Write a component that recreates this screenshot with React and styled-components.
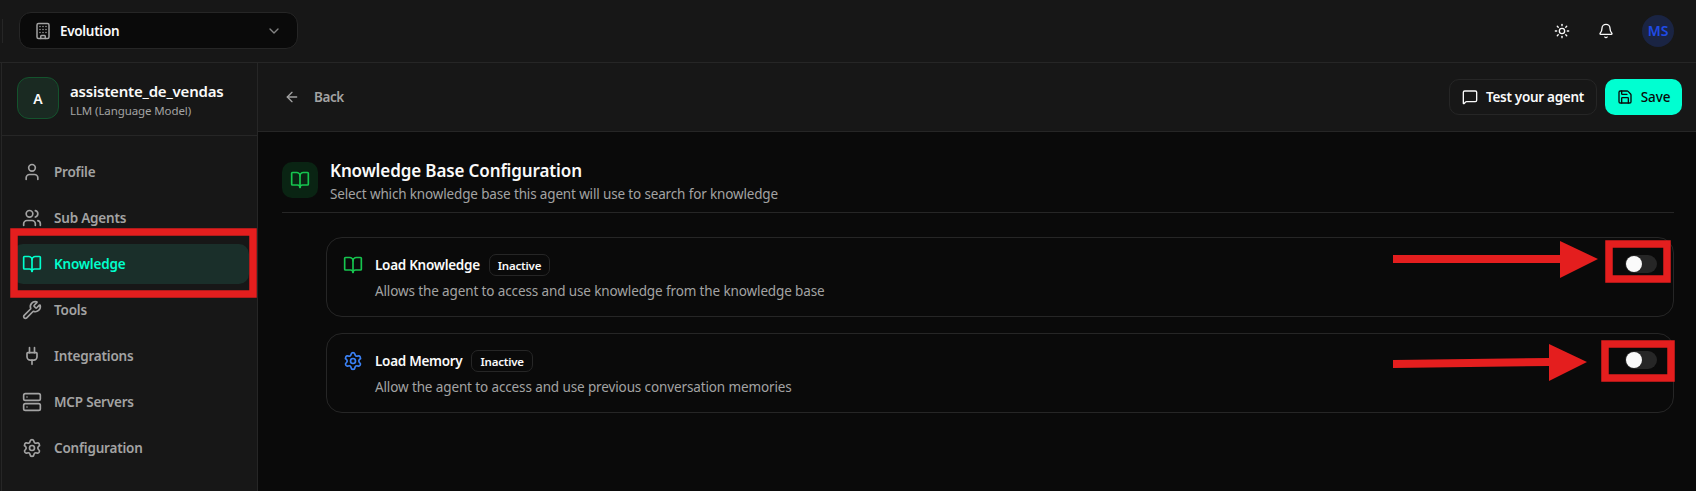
import React from 'react';
import styled, { createGlobalStyle } from 'styled-components';
import {
  ArrowLeft,
  Bell,
  BookOpen,
  Building,
  ChevronDown,
  MessageSquare,
  Plug,
  Save,
  Server,
  Settings,
  Sun,
  User,
  Users,
  Wrench,
} from 'lucide-react';

const GlobalStyle = createGlobalStyle`
  html, body {
    margin: 0;
    padding: 0;
    background: #171717;
    font-family: "Noto Sans", "Open Sans", sans-serif;
    color: #fafafa;
  }
  * { box-sizing: border-box; }
`;

const Page = styled.div`
  position: relative;
  width: 1696px;
  height: 491px;
  overflow: hidden;
  display: flex;
  flex-direction: column;
  background: #171717;
`;

const TopBar = styled.header`
  height: 63px;
  flex: none;
  display: flex;
  align-items: center;
  padding: 0 22px 1px 2px;
  border-bottom: 1px solid #262626;
`;

const TopSeparator = styled.span`
  width: 1px;
  height: 24px;
  background: #262626;
  margin-right: 16px;
`;

const OrgSelect = styled.button`
  width: 279px;
  height: 37px;
  display: flex;
  align-items: center;
  gap: 8px;
  padding: 0 15px 0 14px;
  background: #0a0a0a;
  border: 1px solid #262626;
  border-radius: 12px;
  color: #fafafa;
  font: 600 13.5px "Noto Sans", sans-serif;
  letter-spacing: -0.3px;
  svg:first-child { color: #a3a3a3; }
  svg:last-child { color: #a3a3a3; margin-left: auto; opacity: .8; }
`;

const TopActions = styled.div`
  margin-left: auto;
  display: flex;
  align-items: center;
  gap: 28px;
  color: #fafafa;
`;

const UserAvatar = styled.div`
  width: 32px;
  height: 32px;
  border-radius: 50%;
  background: #1a2443;
  color: #1f4be6;
  display: flex;
  align-items: center;
  justify-content: center;
  font-size: 14px;
  font-weight: 600;
`;

const Body = styled.div`
  flex: 1;
  display: flex;
  min-height: 0;
`;

const Sidebar = styled.aside`
  width: 257px;
  margin-left: 1px;
  flex: none;
  border-left: 1px solid #262626;
  border-right: 1px solid #262626;
  display: flex;
  flex-direction: column;
`;

const AgentHeader = styled.div`
  height: 73px;
  display: flex;
  align-items: center;
  gap: 11px;
  padding: 0 16px 2px 15px;
  border-bottom: 1px solid #262626;
`;

const AgentBadge = styled.div`
  width: 42px;
  height: 42px;
  flex: none;
  border-radius: 12px;
  border: 1px solid #14532d;
  background: #1a2a22;
  display: flex;
  align-items: center;
  justify-content: center;
  font-size: 14px;
  font-weight: 600;
`;

const AgentText = styled.div`
  margin-top: 4px;
`;

const AgentName = styled.div`
  font-size: 15px;
  font-weight: 600;
  line-height: 20px;
  letter-spacing: -0.2px;
`;

const AgentType = styled.div`
  margin-top: 1px;
  font-size: 11.5px;
  line-height: 18px;
  letter-spacing: -0.1px;
  color: #a3a3a3;
`;

const Nav = styled.nav`
  display: flex;
  flex-direction: column;
  gap: 6px;
  padding: 16px 8px 0 11px;
`;

const NavItem = styled.a`
  height: 40px;
  display: flex;
  align-items: center;
  gap: 12px;
  padding: 0 0 0 9px;
  border-radius: 10px;
  font-size: 13.5px;
  font-weight: 600;
  letter-spacing: -0.2px;
  color: ${props => (props.$active ? '#00ffcc' : '#a3a3a3')};
  background: ${props => (props.$active ? '#1a2f2a' : 'transparent')};
`;

const Main = styled.main`
  flex: 1;
  min-width: 0;
  display: flex;
  flex-direction: column;
  background: #0a0a0a;
`;

const MainHeader = styled.div`
  height: 69px;
  flex: none;
  display: flex;
  align-items: center;
  gap: 12px;
  padding: 1px 14px 1px 26px;
  background: #171717;
  border-bottom: 1px solid #262626;
`;

const BackLink = styled.span`
  display: flex;
  align-items: center;
  gap: 14px;
  font-size: 13.5px;
  font-weight: 600;
  letter-spacing: -0.4px;
  color: #a3a3a3;
`;

const TestButton = styled.button`
  margin-left: auto;
  width: 148px;
  height: 36px;
  display: flex;
  align-items: center;
  justify-content: center;
  gap: 8px;
  background: #171717;
  border: 1px solid #262626;
  border-radius: 10px;
  color: #fafafa;
  font: 600 13.5px "Noto Sans", sans-serif;
  letter-spacing: -0.3px;
`;

const SaveButton = styled.button`
  margin-left: -4px;
  width: 77px;
  height: 36px;
  display: flex;
  align-items: center;
  justify-content: center;
  gap: 8px;
  background: #00ffd1;
  border: 0;
  border-radius: 10px;
  color: #0a0a0a;
  font: 500 13.5px "Noto Sans", sans-serif;
  letter-spacing: -0.1px;
`;

const Content = styled.div`
  padding: 30px 22px 0 24px;
`;

const SectionHead = styled.div`
  display: flex;
  gap: 12px;
  padding-bottom: 8px;
  border-bottom: 1px solid #262626;
`;

const IconBox = styled.div`
  width: 36px;
  height: 36px;
  flex: none;
  border-radius: 10px;
  background: #0a2413;
  color: #16c54f;
  display: flex;
  align-items: center;
  justify-content: center;
`;

const SectionTitle = styled.h2`
  margin: -1px 0 0;
  font-size: 17px;
  font-weight: 600;
  line-height: 20px;
  letter-spacing: -0.12px;
`;

const SectionSub = styled.p`
  margin: 3px 0 0;
  font-size: 13.5px;
  line-height: 20px;
  letter-spacing: -0.15px;
  color: #a3a3a3;
`;

const CardList = styled.div`
  display: flex;
  flex-direction: column;
  gap: 16px;
  padding: 24px 0 0 44px;
`;

const Card = styled.section`
  height: 80px;
  display: flex;
  align-items: flex-start;
  gap: 12px;
  padding: 17px 17px 0 16px;
  border: 1px solid #262626;
  border-radius: 16px;
  color: ${props => props.$iconColor};
`;

const CardText = styled.div`
  flex: 1;
`;

const CardTitleRow = styled.div`
  display: flex;
  align-items: center;
  gap: 9px;
  height: 20px;
`;

const CardTitle = styled.h3`
  margin: 0;
  font-size: 13.5px;
  font-weight: 600;
  letter-spacing: -0.28px;
  color: #fafafa;
`;

const Badge = styled.span`
  height: 22px;
  display: flex;
  align-items: center;
  padding: 0 8px;
  border: 1px solid #262626;
  border-radius: 7px;
  font-size: 11.5px;
  font-weight: 600;
  letter-spacing: -0.2px;
  color: #fafafa;
`;

const CardDesc = styled.p`
  margin: 6px 0 0;
  font-size: 13.5px;
  line-height: 20px;
  letter-spacing: -0.12px;
  color: #a3a3a3;
`;

const Toggle = styled.span`
  width: 32px;
  height: 18px;
  flex: none;
  margin-right: -1px;
  padding: 1px;
  border-radius: 9px;
  background: #262626;
  display: flex;
  &::before {
    content: '';
    width: 16px;
    height: 16px;
    border-radius: 50%;
    background: #fafafa;
  }
`;

const Annotations = styled.svg`
  position: absolute;
  inset: 0;
  pointer-events: none;
`;

const navItems = [
  { label: 'Profile', Icon: User },
  { label: 'Sub Agents', Icon: Users },
  { label: 'Knowledge', Icon: BookOpen, active: true },
  { label: 'Tools', Icon: Wrench },
  { label: 'Integrations', Icon: Plug },
  { label: 'MCP Servers', Icon: Server },
  { label: 'Configuration', Icon: Settings },
];

const cards = [
  {
    title: 'Load Knowledge',
    desc: 'Allows the agent to access and use knowledge from the knowledge base',
    Icon: BookOpen,
    color: '#16c54f',
  },
  {
    title: 'Load Memory',
    desc: 'Allow the agent to access and use previous conversation memories',
    Icon: Settings,
    color: '#3b82f6',
  },
];

export default function App() {
  return (
    <Page>
      <GlobalStyle />
      <TopBar>
        <TopSeparator />
        <OrgSelect>
          <Building size={18} />
          Evolution
          <ChevronDown size={16} />
        </OrgSelect>
        <TopActions>
          <Sun size={16} />
          <Bell size={16} />
          <UserAvatar>MS</UserAvatar>
        </TopActions>
      </TopBar>
      <Body>
        <Sidebar>
          <AgentHeader>
            <AgentBadge>A</AgentBadge>
            <AgentText>
              <AgentName>assistente_de_vendas</AgentName>
              <AgentType>LLM (Language Model)</AgentType>
            </AgentText>
          </AgentHeader>
          <Nav>
            {navItems.map(({ label, Icon, active }) => (
              <NavItem key={label} $active={active}>
                <Icon size={20} />
                {label}
              </NavItem>
            ))}
          </Nav>
        </Sidebar>
        <Main>
          <MainHeader>
            <BackLink>
              <ArrowLeft size={16} />
              Back
            </BackLink>
            <TestButton>
              <MessageSquare size={16} />
              Test your agent
            </TestButton>
            <SaveButton>
              <Save size={16} />
              Save
            </SaveButton>
          </MainHeader>
          <Content>
            <SectionHead>
              <IconBox>
                <BookOpen size={20} />
              </IconBox>
              <div>
                <SectionTitle>Knowledge Base Configuration</SectionTitle>
                <SectionSub>Select which knowledge base this agent will use to search for knowledge</SectionSub>
              </div>
            </SectionHead>
            <CardList>
              {cards.map(({ title, desc, Icon, color }) => (
                <Card key={title} $iconColor={color}>
                  <Icon size={20} />
                  <CardText>
                    <CardTitleRow>
                      <CardTitle>{title}</CardTitle>
                      <Badge>Inactive</Badge>
                    </CardTitleRow>
                    <CardDesc>{desc}</CardDesc>
                  </CardText>
                  <Toggle />
                </Card>
              ))}
            </CardList>
          </Content>
        </Main>
      </Body>
      {/* red marks drawn on top of the screenshot */}
      <Annotations width="1696" height="491" viewBox="0 0 1696 491">
        <g fill="none" stroke="#e41e1e" strokeWidth="7.5">
          <rect x="14" y="232" width="239" height="62" />
          <rect x="1609" y="244" width="58" height="35" />
          <rect x="1605" y="344" width="66" height="34" />
        </g>
        <g fill="#e41e1e">
          <polygon points="1393,255 1560,255 1560,241 1598,259 1560,278 1560,263 1393,263" />
          <polygon points="1393,360 1549,358 1549,344 1587,362 1549,381 1549,366 1393,368" />
        </g>
      </Annotations>
    </Page>
  );
}
